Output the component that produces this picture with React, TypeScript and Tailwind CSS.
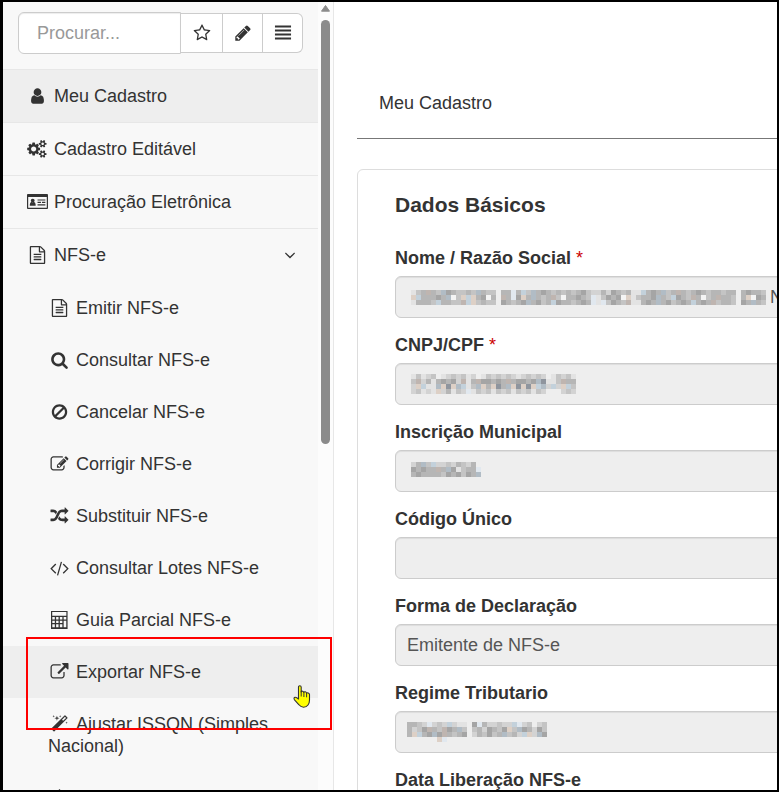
import { useState } from "react";

const ICONS = {
    user: "M1536 1399q0 109-62.5 187t-150.5 78h-854q-88 0-150.5-78t-62.5-187q0-85 8.5-160.5t31.5-152 58.5-131 94-89 134.5-34.5q131 128 313 128t313-128q76 0 134.5 34.5t94 89 58.5 131 31.5 152 8.5 160.5zm-256-887q0 159-112.5 271.5t-271.5 112.5-271.5-112.5-112.5-271.5 112.5-271.5 271.5-112.5 271.5 112.5 112.5 271.5z",
    search: "M1216 832q0-185-131.5-316.5t-316.5-131.5-316.5 131.5-131.5 316.5 131.5 316.5 316.5 131.5 316.5-131.5 131.5-316.5zm512 832q0 52-38 90t-90 38q-54 0-90-38l-343-342q-179 124-399 124-143 0-273.5-55.5t-225-150-150-225-55.5-273.5 55.5-273.5 150-225 225-150 273.5-55.5 273.5 55.5 225 150 150 225 55.5 273.5q0 220-124 399l343 343q37 37 37 90z",
    file: "M1596 380q28 28 48 76t20 88v1152q0 40-28 68t-68 28h-1344q-40 0-68-28t-28-68v-1600q0-40 28-68t68-28h896q40 0 88 20t76 48zm-444-244v376h376q-10-29-22-41l-313-313q-12-12-41-22zm384 1528v-1024h-416q-40 0-68-28t-28-68v-416h-768v1536h1280zm-1024-864q0-14 9-23t23-9h704q14 0 23 9t9 23v64q0 14-9 23t-23 9h-704q-14 0-23-9t-9-23v-64zm736 224q14 0 23 9t9 23v64q0 14-9 23t-23 9h-704q-14 0-23-9t-9-23v-64q0-14 9-23t23-9h704zm0 256q14 0 23 9t9 23v64q0 14-9 23t-23 9h-704q-14 0-23-9t-9-23v-64q0-14 9-23t23-9h704z",
    star: "M1201 1004l306-297-422-62-189-382-189 382-422 62 306 297-73 421 378-199 377 199zm527-357q0 22-26 48l-363 354 86 500q1 7 1 20 0 50-41 50-19 0-40-12l-449-236-449 236q-22 12-40 12-21 0-31.5-14.5t-10.5-35.5q0-6 2-20l86-500-364-354q-25-27-25-48 0-37 56-46l502-73 225-455q19-41 49-41t49 41l225 455 502 73q56 9 56 46z",
    pencil: "M491 1536l91-91-235-235-91 91v107h128v128h107zm523-928q0-22-22-22-10 0-17 7l-542 542q-7 7-7 17 0 22 22 22 10 0 17-7l542-542q7-7 7-17zm-54-192l416 416-832 832h-416v-416zm683 96q0 53-37 90l-166 166-416-416 166-165q36-38 90-38 53 0 91 38l235 234q37 39 37 91z",
    lines: "M96 149h1600v200h-1600zM96 548h1600v200h-1600zM96 946h1600v200h-1600zM96 1344h1600v200h-1600z",
    chevron: "M1395 736q0 13-10 23l-466 466q-10 10-23 10t-23-10l-466-466q-10-10-10-23t10-23l50-50q10-10 23-10t23 10l393 393 393-393q10-10 23-10t23 10l50 50q10 10 10 23z",
    ban: "M1440 893q0-161-87-295l-754 753q137 89 297 89 111 0 211.5-43.5t173.5-116.5 116-174.5 43-212.5zm-999 299l755-754q-135-91-300-91-148 0-273 73t-198 199-73 274q0 162 89 299zm1223-299q0 157-61 300t-163.5 246-245 164-298.5 61-298.5-61-245-164-163.5-246-61-300 61-299.5 163.5-245.5 245-164 298.5-61 298.5 61 245 164 163.5 245.5 61 299.5z",
    edit: "M888 1184l116-116-152-152-116 116v56h96v96h56zm440-720q-16-16-33 1l-350 350q-17 17-1 33t33-1l350-350q17-17 1-33zm80 594v190q0 119-84.5 203.5t-203.5 84.5h-832q-119 0-203.5-84.5t-84.5-203.5v-832q0-119 84.5-203.5t203.5-84.5h832q63 0 117 25 15 7 18 23 3 17-9 29l-49 49q-14 14-32 8-23-6-45-6h-832q-66 0-113 47t-47 113v832q0 66 47 113t113 47h832q66 0 113-47t47-113v-126q0-13 9-22l64-64q15-15 35-7t20 29zm-96-738l288 288-672 672h-288v-288zm444 132l-92 92-288-288 92-92q28-28 68-28t68 28l152 152q28 28 28 68t-28 68z",
    external: "M1408 928v320q0 119-84.5 203.5t-203.5 84.5h-832q-119 0-203.5-84.5t-84.5-203.5v-832q0-119 84.5-203.5t203.5-84.5h704q14 0 23 9t9 23v64q0 14-9 23t-23 9h-704q-66 0-113 47t-47 113v832q0 66 47 113t113 47h832q66 0 113-47t47-113v-320q0-14 9-23t23-9h64q14 0 23 9t9 23zm384-864v512q0 26-19 45t-45 19-45-19l-176-176-652 652q-10 10-23 10t-23-10l-114-114q-10-10-10-23t10-23l652-652-176-176q-19-19-19-45t19-45 45-19h512q26 0 45 19t19 45z",
    random: "M666 481q-60 92-137 273-22-45-37-72.5t-40.5-63.5-51-56.5-63-35-81.5-14.5h-224q-14 0-23-9t-9-23v-192q0-14 9-23t23-9h224q250 0 410 225zm1126 799q0 14-9 23l-320 320q-9 9-23 9-13 0-22.5-9.5t-9.5-22.5v-192q-32 0-85 .5t-81 1-73-1-71-5-64-10.5-63-18.5-58-28.5-59-40-55-53.5-56-69.5q59-93 136-273 22 45 37 72.5t40.5 63.5 51 56.5 63 35 81.5 14.5h256v-192q0-14 9-23t23-9q12 0 24 10l319 319q9 9 9 23zm0-896q0 14-9 23l-320 320q-9 9-23 9-13 0-22.5-9.5t-9.5-22.5v-192h-256q-48 0-87 15t-69 45-51 61.5-45 77.5q-32 62-78 171-29 66-49.5 111t-54 105-64 100-74 83-90 68.5-106.5 42-128 16.5h-224q-14 0-23-9t-9-23v-192q0-14 9-23t23-9h224q48 0 87-15t69-45 51-61.5 45-77.5q32-62 78-171 29-66 49.5-111t54-105 64-100 74-83 90-68.5 106.5-42 128-16.5h256v-192q0-14 9-23t23-9q12 0 24 10l319 319q9 9 9 23z",
    code: "M553 1399l-50 50q-10 10-23 10t-23-10l-466-466q-10-10-10-23t10-23l466-466q10-10 23-10t23 10l50 50q10 10 10 23t-10 23l-393 393 393 393q10 10 10 23t-10 23zm591-1067l-373 1291q-4 13-15.5 19.5t-23.5 2.5l-62-17q-13-4-19.5-15.5t-2.5-24.5l373-1291q4-13 15.5-19.5t23.5-2.5l62 17q13 4 19.5 15.5t2.5 24.5zm657 651l-466 466q-10 10-23 10t-23-10l-50-50q-10-10-10-23t10-23l393-393-393-393q-10-10-10-23t10-23l50-50q10-10 23-10t23 10l466 466q10 10 10 23t-10 23z",
    magic: "M1254 581l293-293-107-107-293 293zm447-293q0 27-18 45l-1286 1286q-18 18-45 18t-45-18l-198-198q-18-18-18-45t18-45l1286-1286q18-18 45-18t45 18l198 198q18 18 18 45zm-1351-190l98 30-98 30-30 98-30-98-98-30 98-30 30-98zm350 162l196 60-196 60-60 196-60-196-196-60 196-60 60-196zm930 478l98 30-98 30-30 98-30-98-98-30 98-30 30-98zm-640-640l98 30-98 30-30 98-30-98-98-30 98-30 30-98z",
    calculator: "M50 0H1700V1792H50ZM170 110V480H1580V110ZM180 600V840H430V600ZM560 600V840H800V600ZM930 600V840H1180V600ZM1310 600V840H1570V600ZM180 960V1200H430V960ZM560 960V1200H800V960ZM930 960V1200H1180V960ZM180 1320V1620H430V1320ZM560 1320V1620H800V1320ZM930 1320V1620H1180V1320ZM1310 960V1620H1570V960Z",
    idCard: "M-60 100Q-150 100-150 190V1500Q-150 1590-60 1590H1860Q1940 1590 1940 1500V190Q1940 100 1860 100ZM-30 390H1820V1480H-30ZM420 560A190 190 0 1 1 419 560ZM130 1280V1140Q150 900 290 890Q420 960 550 890Q690 900 710 1140V1280ZM900 640H1680V750H900ZM900 880H1240V990H900ZM1340 880H1680V990H1340ZM900 1130H1680V1240H900Z",
    upload: "M896 0L1250 360H1050V900H742V360H542ZM128 1100H1664V1650H128Z",
};

const GEAR =
    "M1856 1325v140q0 16-149 31-12 27-30 52 51 113 51 138 0 4-4 7-122 71-124 71-8 0-46-47t-52-68q-20 2-30 2t-30-2q-14 21-52 68t-46 47q-2 0-124-71-4-3-4-7 0-25 51-138-18-25-30-52-149-15-149-31v-140q0-16 149-31 13-29 30-52-51-113-51-138 0-4 4-7 4-2 35-20t59-34 30-16q8 0 46 46.5t52 67.5q20-2 30-2t30 2q51-71 92-112l6-2q4 0 124 70 4 3 4 7 0 25-51 138 17 23 30 52 149 15 149 31zM1600 1395q0-52-38-90t-90-38-90 38-38 90q0 53 37.5 90.5t90.5 37.5 90.5-37.5 37.5-90.5z";

const GEAR_LARGE =
    "M832 896q0-106-75-181t-181-75-181 75-75 181 75 181 181 75 181-75 75-181zm384-91v185q0 10-7 19.5t-16 10.5l-155 24q-11 35-32 76 34 48 90 115 7 11 7 20 0 12-7 19-23 30-82.5 89.5t-78.5 59.5q-11 0-21-7l-115-90q-37 19-77 31-11 108-23 155-7 24-30 24h-186q-11 0-20-7.5t-10-17.5l-23-153q-34-10-75-31l-118 89q-7 7-20 7-11 0-21-8-144-133-144-160 0-9 7-19 10-14 41-53t47-61q-23-44-35-82l-152-24q-10-1-17-9.5t-7-19.5v-185q0-10 7-19.5t16-10.5l155-24q11-35 32-76-34-48-90-115-7-11-7-20 0-12 7-20 22-30 82-89t79-59q11 0 21 7l115 90q34-18 77-32 11-108 23-154 7-24 30-24h186q11 0 20 7.5t10 17.5l23 153q34 10 75 31l118-89q8-7 20-7 11 0 21 8 144 133 144 160 0 8-7 19-12 16-42 54t-45 60q23 48 34 82l152 23q10 2 17 10.5t7 19.5z";

type IconName = keyof typeof ICONS | "cogs";

function Icon({ name, className }: { name: IconName; className?: string }) {
    return (
        <svg
            aria-hidden="true"
            viewBox={name === "cogs" ? "0 0 1920 1792" : "0 0 1792 1792"}
            fill="currentColor"
            fillRule="evenodd"
            className={className ?? "mr-[5px] inline-block h-[18px] w-[23px] overflow-visible align-[-3px]"}
        >
            {name === "cogs" ? (
                <>
                    <path d={GEAR_LARGE} />
                    <path d={GEAR} />
                    <path d={GEAR} transform="translate(0 -1024)" />
                </>
            ) : (
                <path d={ICONS[name]} />
            )}
        </svg>
    );
}

// Redacted values are drawn as rows of coloured 5px blocks, "." leaves a gap
const TONES: Record<string, string> = {
    "0": "#e3e3e3",
    "1": "#d3d3d3",
    "2": "#c4c4c4",
    "3": "#b6b6b6",
    "4": "#a5a5a5",
    "5": "#8f959e",
    b: "#c3d1db",
    c: "#b1bcc5",
    p: "#ddd0c6",
    q: "#bfb5b0",
    w: "#f4f4f4",
    i: "#e1e8ef",
};

const NAME_MASK = [
    "023q32c432232c322.33i3b2c343232323421131432300b343c23q32343233233.34332",
    "pb33343cw2pbp34w3.q3i4p3c323q2w33432i02434wp02334c32b432q3w23q332.3pw43",
    "03332b3322qbp2322.43234c3423b4332343i0i2432q00343c342343b343q2332.43c32",
];
const CNPJ_MASK = [
    "02012.0121201.0212121012121.02120",
    "2q13034341q03q44343q34434c5002q33",
    "1pb00cp5pcb02cp3p53cp5p5pbc1b1pb2",
    "12010p13021i021202120212021...121",
];
const MUNICIPAL_MASK = ["13c2b11213213.", "43433q3c40233i", "3433332434243c"];
const REGIME_MASK = [
    "3321i121b100.4i311211bi12.12",
    "3124q32q43c2.2314324p2c43142",
    "3pb34c4q3234.132423c231bp1c4",
    "......pi....................",
];

function Mosaic({ rows }: { rows: string[] }) {
    const width = rows[0].length * 5;
    const height = rows.length * 5;

    return (
        <svg aria-hidden="true" width={width} height={height} shapeRendering="crispEdges" className="shrink-0">
            {rows.map((row, y) =>
                row
                    .split("")
                    .map((tone, x) =>
                        TONES[tone] ? (
                            <rect key={`${x}-${y}`} x={x * 5} y={y * 5} width={5} height={5} fill={TONES[tone]} />
                        ) : null,
                    ),
            )}
        </svg>
    );
}

const MAIN_ITEMS: { label: string; icon: IconName; active?: boolean; open?: boolean }[] = [
    { label: "Meu Cadastro", icon: "user", active: true },
    { label: "Cadastro Editável", icon: "cogs" },
    { label: "Procuração Eletrônica", icon: "idCard" },
    { label: "NFS-e", icon: "file", open: true },
];

const SUB_ITEMS: { label: string; icon: IconName; hover?: boolean }[] = [
    { label: "Emitir NFS-e", icon: "file" },
    { label: "Consultar NFS-e", icon: "search" },
    { label: "Cancelar NFS-e", icon: "ban" },
    { label: "Corrigir NFS-e", icon: "edit" },
    { label: "Substituir NFS-e", icon: "random" },
    { label: "Consultar Lotes NFS-e", icon: "code" },
    { label: "Guia Parcial NFS-e", icon: "calculator" },
    { label: "Exportar NFS-e", icon: "external", hover: true },
    { label: "Ajustar ISSQN (Simples Nacional)", icon: "magic" },
    { label: "", icon: "upload" },
];

interface FieldData {
    id: string;
    label: string;
    value?: string;
    required?: boolean;
    mask?: string[];
    maskClass?: string;
    tail?: string;
}

const FIELDS: FieldData[] = [
    { id: "nome", label: "Nome / Razão Social", required: true, mask: NAME_MASK, maskClass: "left-4 pb-0", tail: "N" },
    { id: "cnpj", label: "CNPJ/CPF", required: true, mask: CNPJ_MASK, maskClass: "left-4 pb-0" },
    { id: "inscricao", label: "Inscrição Municipal", mask: MUNICIPAL_MASK, maskClass: "left-4 pb-1" },
    { id: "codigo", label: "Código Único" },
    { id: "forma", label: "Forma de Declaração", value: "Emitente de NFS-e" },
    { id: "regime", label: "Regime Tributario", mask: REGIME_MASK, maskClass: "left-3 pb-0" },
    { id: "liberacao", label: "Data Liberação NFS-e" },
];

function Field({ field }: { field: FieldData }) {
    return (
        <div className="mb-4">
            <label htmlFor={field.id} className="mb-[7px] block font-bold">
                {field.label}
                {field.required && <span className="font-normal text-[#cc0000]"> *</span>}
            </label>
            <div className="relative">
                <input
                    id={field.id}
                    type="text"
                    readOnly
                    value={field.value ?? ""}
                    className="block h-[42px] w-full rounded-md border border-[#ccc] bg-[#eee] px-[11px] text-[#555] shadow-[inset_0_1px_1px_rgba(0,0,0,0.075)] outline-none"
                />
                {field.mask && (
                    <div
                        className={`pointer-events-none absolute inset-y-0 flex items-center text-[#555] ${field.maskClass}`}
                    >
                        <Mosaic rows={field.mask} />
                        {field.tail && <span className="ml-1">{field.tail}</span>}
                    </div>
                )}
            </div>
        </div>
    );
}

function Sidebar() {
    const [query, setQuery] = useState("");
    const tool = "flex h-10 items-center justify-center border border-l-0 border-[#ccc] bg-white";
    const toolIcon = "h-[18px] w-[18px]";

    return (
        <aside className="flex w-[331px] shrink-0 border-r border-[#e7e7e7] bg-[#fcfcfc]">
            <div className="min-w-0 flex-1 bg-[#f8f8f8]">
                <div className="flex items-center px-[15px] pt-[10px] pb-[15px]">
                    <input
                        type="text"
                        aria-label="Procurar"
                        placeholder="Procurar..."
                        value={query}
                        onChange={(e) => setQuery(e.target.value)}
                        className="h-[42px] min-w-0 flex-1 rounded-l-md border border-[#ccc] bg-white px-[18px] shadow-[inset_0_1px_1px_rgba(0,0,0,0.075)] outline-none placeholder:text-[#999]"
                    />
                    <button type="button" aria-label="Favoritos" className={`${tool} w-[42px]`}>
                        <Icon name="star" className={toolIcon} />
                    </button>
                    <button type="button" aria-label="Editar" className={`${tool} w-10`}>
                        <Icon name="pencil" className={toolIcon} />
                    </button>
                    <button type="button" aria-label="Menu" className={`${tool} w-10 rounded-r-md`}>
                        <Icon name="lines" className={toolIcon} />
                    </button>
                </div>
                <nav>
                    {MAIN_ITEMS.map((item) => (
                        <a
                            key={item.label}
                            href="#"
                            className={`flex items-center border-t border-[#e7e7e7] py-[15px] pr-[18px] pl-[23px] ${item.active ? "bg-[#eee]" : ""}`}
                        >
                            <span className="flex-1">
                                <Icon name={item.icon} />
                                {item.label}
                            </span>
                            {item.open && <Icon name="chevron" className="h-[18px] w-[20px]" />}
                        </a>
                    ))}
                    <div className="pt-px">
                        {SUB_ITEMS.map((item) => (
                            <a
                                key={item.icon + item.label}
                                href="#"
                                className={`block py-[15px] pr-4 pl-[45px] ${item.hover ? "bg-[#eee]" : ""}`}
                            >
                                <Icon name={item.icon} />
                                {item.label}
                            </a>
                        ))}
                    </div>
                </nav>
            </div>
            <div className="flex w-[15px] flex-col items-center pt-[3px]">
                <svg aria-hidden="true" width="9" height="7" className="mb-2" fill="#8b8b8b">
                    <path d="M4.5 0.5L8.5 6.2H0.5Z" stroke="#8b8b8b" strokeLinejoin="round" />
                </svg>
                <div className="h-[54%] w-[9px] rounded-full bg-[#8b8b8b]" />
            </div>
        </aside>
    );
}

export default function App() {
    return (
        <div className="relative flex h-screen overflow-hidden border-2 border-l-[3px] border-black bg-white font-['Liberation_Sans',Arial,sans-serif] text-[18px] leading-[22px] text-[#333]">
            <Sidebar />
            <main className="min-w-0 flex-1 overflow-hidden pl-[23px]">
                <h1 className="border-b border-[#777] pt-[90px] pb-6 pl-[22px]">Meu Cadastro</h1>
                <section className="mt-[30px] -mr-14 rounded-md border border-[#ddd] px-[37px] pt-[22px]">
                    <h2 className="mb-[29px] text-[21px] leading-[26px] font-bold">Dados Básicos</h2>
                    {FIELDS.map((field) => (
                        <Field key={field.id} field={field} />
                    ))}
                </section>
            </main>

            <div className="pointer-events-none absolute top-[635px] left-[23px] h-[93px] w-[306px] border-2 border-[#fe0000]" />
            <svg
                aria-hidden="true"
                viewBox="0 0 20 25"
                className="pointer-events-none absolute top-[683px] left-[290px] h-[25px] w-5"
            >
                <path
                    d="M5.5 2Q5.5 .8 6.8 .8T8.2 2V7Q8.4 6 9.5 6.2T10.8 7.4Q11.1 6.5 12.3 6.8T13.5 8.2Q14 7.4 15.2 7.9T16.5 9.5V15Q16.5 18 15 20Q13.5 22.2 10.5 22.2Q7.5 22 6 19.8L1.5 14.8Q.3 12.8 2 12.2Q3.5 12 5.5 14Z"
                    fill="#ffff00"
                    stroke="#333"
                    strokeWidth="1.1"
                    strokeLinejoin="round"
                />
                <path d="M8.2 6V11.5M10.9 7V12M13.6 8V12.3" stroke="#333" strokeWidth="1" />
            </svg>
        </div>
    );
}
